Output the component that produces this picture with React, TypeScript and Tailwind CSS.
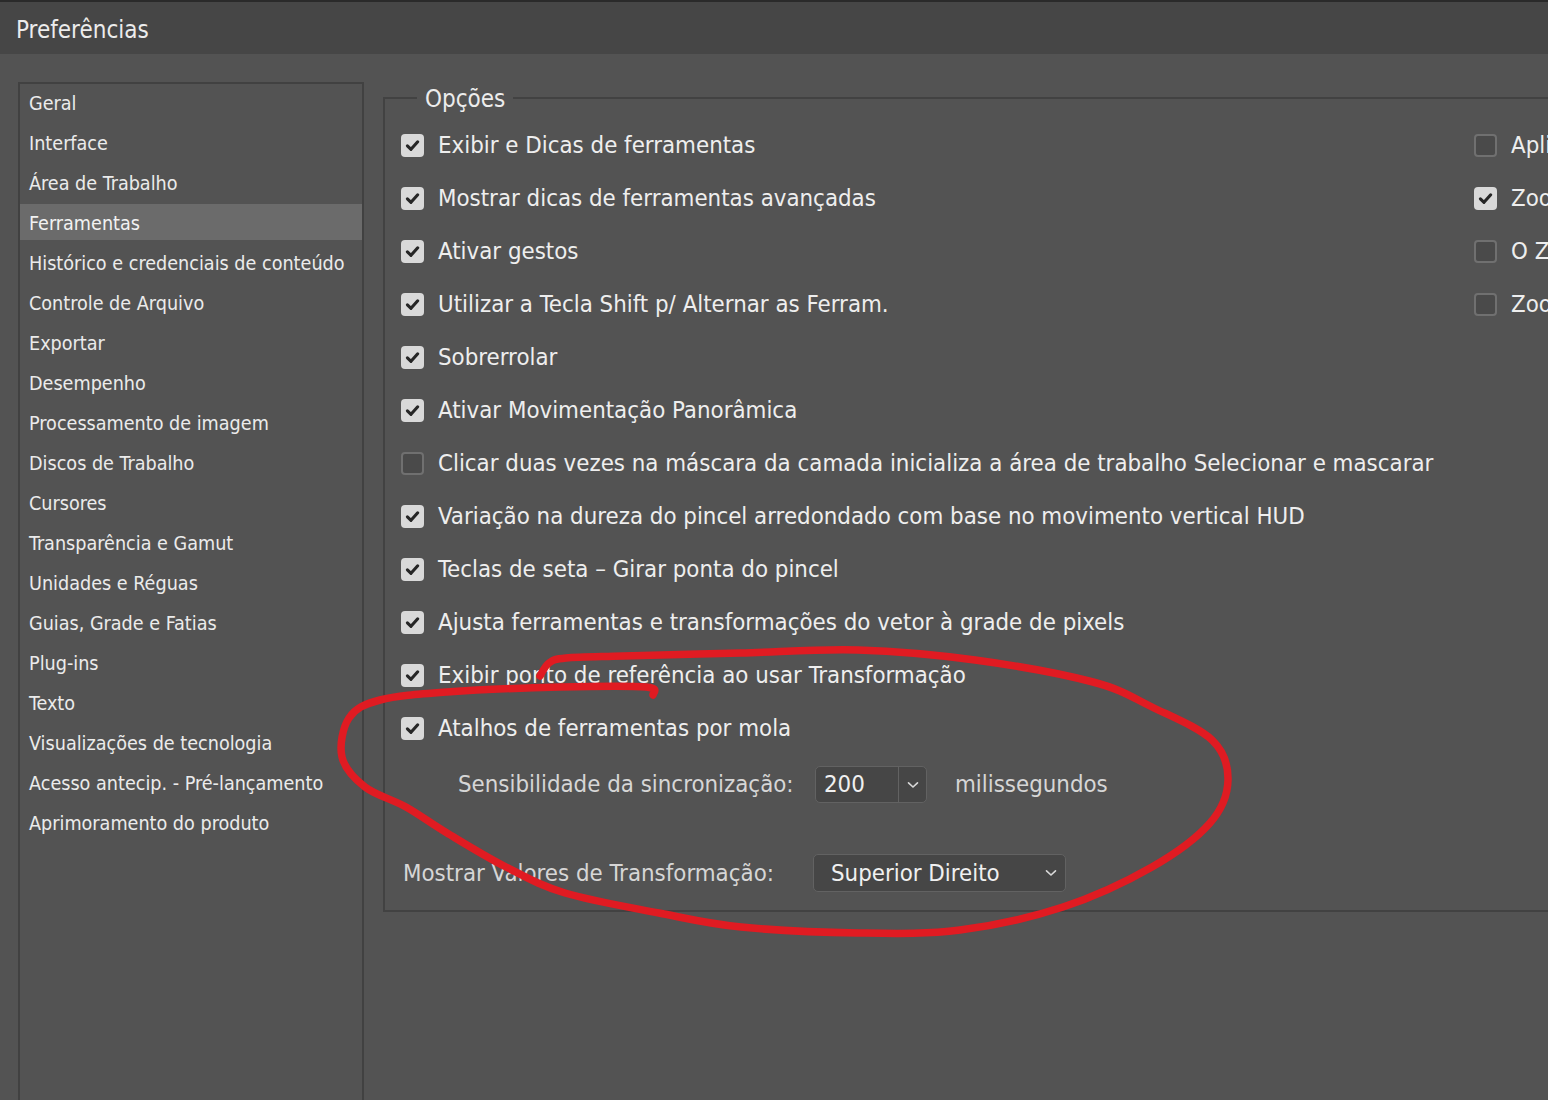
const SECTIONS = [
  "Geral",
  "Interface",
  "Área de Trabalho",
  "Ferramentas",
  "Histórico e credenciais de conteúdo",
  "Controle de Arquivo",
  "Exportar",
  "Desempenho",
  "Processamento de imagem",
  "Discos de Trabalho",
  "Cursores",
  "Transparência e Gamut",
  "Unidades e Réguas",
  "Guias, Grade e Fatias",
  "Plug-ins",
  "Texto",
  "Visualizações de tecnologia",
  "Acesso antecip. - Pré-lançamento",
  "Aprimoramento do produto",
];

const OPTIONS: [string, boolean][] = [
  ["Exibir e Dicas de ferramentas", true],
  ["Mostrar dicas de ferramentas avançadas", true],
  ["Ativar gestos", true],
  ["Utilizar a Tecla Shift p/ Alternar as Ferram.", true],
  ["Sobrerrolar", true],
  ["Ativar Movimentação Panorâmica", true],
  ["Clicar duas vezes na máscara da camada inicializa a área de trabalho Selecionar e mascarar", false],
  ["Variação na dureza do pincel arredondado com base no movimento vertical HUD", true],
  ["Teclas de seta – Girar ponta do pincel", true],
  ["Ajusta ferramentas e transformações do vetor à grade de pixels", true],
  ["Exibir ponto de referência ao usar Transformação", true],
  ["Atalhos de ferramentas por mola", true],
];

const SIDE_OPTIONS: [string, boolean][] = [
  ["Aplicar Zoom Animado", false],
  ["Zoom Redimensiona Janelas", true],
  ["O Zoom com a Roda de Rolagem", false],
  ["Zoom no Ponto Clicado", false],
];

// the red hand-drawn loop, as points of a freehand stroke
const SCRIBBLE: [number, number][] = [
  [653, 695], [646, 687], [560, 687], [447, 692], [380, 700], [349, 718], [342, 757],
  [365, 787], [406, 807], [447, 833], [506, 867], [565, 893], [659, 913], [741, 927],
  [858, 933], [960, 930], [1063, 907], [1152, 867], [1210, 823], [1228, 780], [1212, 740],
  [1152, 707], [1093, 682], [975, 660], [858, 650], [741, 653], [623, 656], [566, 658],
  [549, 663], [540, 676],
];

function smoothPath(pts: [number, number][]) {
  let d = `M${pts[0][0]} ${pts[0][1]}`;
  for (let i = 0; i < pts.length - 1; i++) {
    const p0 = pts[i - 1] ?? pts[i];
    const p1 = pts[i];
    const p2 = pts[i + 1];
    const p3 = pts[i + 2] ?? p2;
    const c1x = p1[0] + (p2[0] - p0[0]) / 6;
    const c1y = p1[1] + (p2[1] - p0[1]) / 6;
    const c2x = p2[0] - (p3[0] - p1[0]) / 6;
    const c2y = p2[1] - (p3[1] - p1[1]) / 6;
    d += ` C${c1x.toFixed(1)} ${c1y.toFixed(1)} ${c2x.toFixed(1)} ${c2y.toFixed(1)} ${p2[0]} ${p2[1]}`;
  }
  return d;
}

function Checkbox({ checked }: { checked: boolean }) {
  return checked ? (
    <span className="flex h-[23px] w-[23px] shrink-0 items-center justify-center rounded-[4px] bg-[#d9d9d9]">
      <svg width="15" height="15" viewBox="0 0 15 15">
        <path d="M2.4 7.8 L6 11.3 L12.7 3.8" fill="none" stroke="#262626" strokeWidth="3.1" strokeLinecap="round" strokeLinejoin="round" />
      </svg>
    </span>
  ) : (
    <span className="h-[23px] w-[23px] shrink-0 rounded-[4px] border-2 border-[#707070] bg-[#4a4a4a]" />
  );
}

function Chevron() {
  return (
    <svg width="12" height="8" viewBox="0 0 12 8">
      <path d="M1.5 1.8 L6 6 L10.5 1.8" fill="none" stroke="#d8d8d8" strokeWidth="1.6" strokeLinecap="round" />
    </svg>
  );
}

function OptionRow({ label, checked }: { label: string; checked: boolean }) {
  return (
    <div className="flex h-[53px] items-center gap-[14px] whitespace-nowrap">
      <Checkbox checked={checked} />
      <span className="pt-[1px]">{label}</span>
    </div>
  );
}

export default function App() {
  return (
    <div className="relative h-[1100px] w-[1548px] overflow-hidden bg-[#535353] font-['DejaVu_Sans_Condensed','DejaVu_Sans',sans-serif] text-[#eeeeee]">
      <div className="flex h-[54px] items-center border-t-2 border-[#2a2a2a] bg-[#464646] pl-4 pt-[3px] text-[24px] text-[#ececec]">
        Preferências
      </div>

      <div className="flex h-[1046px] pl-[18px] pt-[28px]">
        <aside className="w-[346px] shrink-0 border-2 border-b-0 border-[#414141]">
          <nav className="flex flex-col gap-1">
            {SECTIONS.map((s) => (
              <div
                key={s}
                className={`flex h-[36px] items-center whitespace-nowrap pl-[9px] pt-[3px] text-[19.6px] ${
                  s === "Ferramentas" ? "bg-[#6b6b6b] text-[#f2f2f2]" : "text-[#ebebeb]"
                }`}
              >
                {s}
              </div>
            ))}
          </nav>
        </aside>

        <div className="ml-[19px] min-w-0 flex-1">
          <fieldset className="border-2 border-r-0 border-[#424242] pb-[18px] pl-[16px] pt-[5px]">
            <legend className="ml-[16px] px-2 pt-[2px] text-[24px] leading-[30px] text-[#ececec]">Opções</legend>

            <div className="flex text-[23.8px]">
              <div className="w-[1073px] shrink-0">
                {OPTIONS.map(([label, checked]) => (
                  <OptionRow key={label} label={label} checked={checked} />
                ))}
              </div>
              <div className="shrink-0">
                {SIDE_OPTIONS.map(([label, checked]) => (
                  <OptionRow key={label} label={label} checked={checked} />
                ))}
              </div>
            </div>

            <div className="mt-[11px] flex h-[37px] items-center pl-[57px] text-[23.8px] text-[#d6d6d6]">
              <span className="w-[357px] shrink-0 whitespace-nowrap pt-[1px]">Sensibilidade da sincronização:</span>
              <div className="flex h-[37px] w-[112px] shrink-0 overflow-hidden rounded-[5px] border border-[#626262] bg-[#464646]">
                <span className="flex flex-1 items-center pl-[8px] text-[#f0f0f0]">200</span>
                <span className="flex w-[28px] items-center justify-center border-l border-[#626262]">
                  <Chevron />
                </span>
              </div>
              <span className="ml-[28px] whitespace-nowrap pt-[1px]">milissegundos</span>
            </div>

            <div className="mt-[51px] flex h-[38px] items-center pl-[2px] text-[23.8px] text-[#d6d6d6]">
              <span className="w-[410px] shrink-0 whitespace-nowrap pt-[1px]">Mostrar Valores de Transformação:</span>
              <div className="flex h-[38px] w-[253px] shrink-0 items-center justify-between rounded-[5px] border border-[#626262] bg-[#464646] pl-[17px] pr-[8px] text-[#f0f0f0]">
                <span className="whitespace-nowrap pt-[1px]">Superior Direito</span>
                <Chevron />
              </div>
            </div>
          </fieldset>
        </div>
      </div>

      <svg className="pointer-events-none absolute inset-0" width="1548" height="1100" viewBox="0 0 1548 1100">
        <path d={smoothPath(SCRIBBLE)} fill="none" stroke="#e01b22" strokeWidth="7.5" strokeLinecap="round" strokeLinejoin="round" />
      </svg>
    </div>
  );
}
